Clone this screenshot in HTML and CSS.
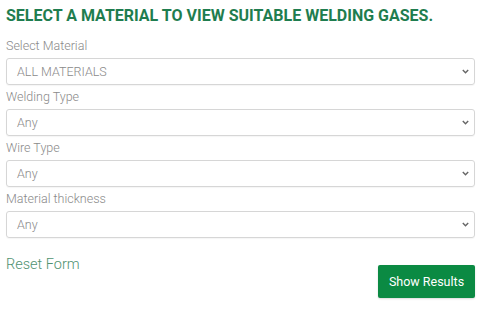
FILE: index.html
```html
<!DOCTYPE html>
<html>
<head>
<meta charset="utf-8">
<link rel="stylesheet" href="styles.css">
</head>
<body>
<div class="form">
  <h1 class="title">SELECT A MATERIAL TO VIEW SUITABLE WELDING GASES.</h1>
  <div class="fields">
    <div class="field">
      <div class="label">Select Material</div>
      <div class="select"><span>ALL MATERIALS</span><svg class="chev" width="7" height="5" viewBox="0 0 7 5"><path d="M0.8 1 L3.5 3.8 L6.2 1" fill="none" stroke="#666" stroke-width="1.4"/></svg></div>
    </div>
    <div class="field">
      <div class="label">Welding Type</div>
      <div class="select"><span>Any</span><svg class="chev" width="7" height="5" viewBox="0 0 7 5"><path d="M0.8 1 L3.5 3.8 L6.2 1" fill="none" stroke="#666" stroke-width="1.4"/></svg></div>
    </div>
    <div class="field">
      <div class="label">Wire Type</div>
      <div class="select"><span>Any</span><svg class="chev" width="7" height="5" viewBox="0 0 7 5"><path d="M0.8 1 L3.5 3.8 L6.2 1" fill="none" stroke="#666" stroke-width="1.4"/></svg></div>
    </div>
    <div class="field">
      <div class="label">Material thickness</div>
      <div class="select"><span>Any</span><svg class="chev" width="7" height="5" viewBox="0 0 7 5"><path d="M0.8 1 L3.5 3.8 L6.2 1" fill="none" stroke="#666" stroke-width="1.4"/></svg></div>
    </div>
  </div>
  <div class="actions">
    <a class="reset">Reset Form</a>
    <button class="submit">Show Results</button>
  </div>
</div>
</body>
</html>
```
FILE: styles.css
```css
html, body {
  margin: 0;
  padding: 0;
  background: #fff;
}
body {
  font-family: Roboto, "Liberation Sans", Arial, sans-serif;
  width: 480px;
  height: 312px;
  overflow: hidden;
}
.form {
  padding: 6px 5px 0 6px;
  display: flex;
  flex-direction: column;
}
.title {
  margin: 0 0 11px 0;
  font-size: 16px;
  line-height: 20px;
  font-weight: 700;
  color: #1f7d4f;
  white-space: nowrap;
}
.fields {
  display: flex;
  flex-direction: column;
  gap: 3px;
}
.field {
  display: flex;
  flex-direction: column;
  gap: 3px;
}
.label {
  font-size: 12.5px;
  line-height: 18px;
  color: #8a8a8a;
  font-weight: 300;
}
.select {
  box-sizing: border-box;
  height: 27px;
  border: 1px solid #d6d6d6;
  border-radius: 3px;
  box-shadow: 0 1px 1px rgba(0,0,0,0.04);
  display: flex;
  align-items: center;
  justify-content: space-between;
  padding: 0 5px 0 10px;
  font-size: 12.5px;
  color: #8a8a8a;
  font-weight: 300;
}
.chev {
  display: block;
}
.actions {
  margin-top: 17px;
  display: flex;
  justify-content: space-between;
  align-items: flex-start;
}
.reset {
  font-size: 14.5px;
  line-height: 20px;
  color: #4f9270;
  font-weight: 300;
  cursor: pointer;
}
.submit {
  margin-top: 10px;
  width: 97px;
  height: 33px;
  border: none;
  border-radius: 2px;
  background: #0b8a43;
  color: #fff;
  font-family: Roboto, "Liberation Sans", Arial, sans-serif;
  font-size: 12.5px;
  padding: 0;
  box-shadow: 0 1px 2px rgba(0,0,0,0.15);
}
```
